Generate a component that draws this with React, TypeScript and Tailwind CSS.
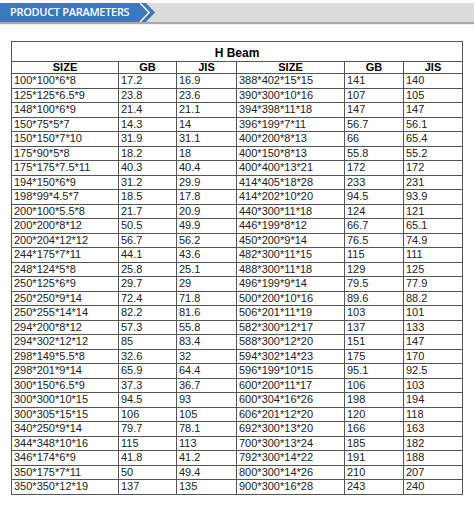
const rows: [string, string, string, string, string, string][] = [
  ["100*100*6*8", "17.2", "16.9", "388*402*15*15", "141", "140"],
  ["125*125*6.5*9", "23.8", "23.6", "390*300*10*16", "107", "105"],
  ["148*100*6*9", "21.4", "21.1", "394*398*11*18", "147", "147"],
  ["150*75*5*7", "14.3", "14", "396*199*7*11", "56.7", "56.1"],
  ["150*150*7*10", "31.9", "31.1", "400*200*8*13", "66", "65.4"],
  ["175*90*5*8", "18.2", "18", "400*150*8*13", "55.8", "55.2"],
  ["175*175*7.5*11", "40.3", "40.4", "400*400*13*21", "172", "172"],
  ["194*150*6*9", "31.2", "29.9", "414*405*18*28", "233", "231"],
  ["198*99*4.5*7", "18.5", "17.8", "414*202*10*20", "94.5", "93.9"],
  ["200*100*5.5*8", "21.7", "20.9", "440*300*11*18", "124", "121"],
  ["200*200*8*12", "50.5", "49.9", "446*199*8*12", "66.7", "65.1"],
  ["200*204*12*12", "56.7", "56.2", "450*200*9*14", "76.5", "74.9"],
  ["244*175*7*11", "44.1", "43.6", "482*300*11*15", "115", "111"],
  ["248*124*5*8", "25.8", "25.1", "488*300*11*18", "129", "125"],
  ["250*125*6*9", "29.7", "29", "496*199*9*14", "79.5", "77.9"],
  ["250*250*9*14", "72.4", "71.8", "500*200*10*16", "89.6", "88.2"],
  ["250*255*14*14", "82.2", "81.6", "506*201*11*19", "103", "101"],
  ["294*200*8*12", "57.3", "55.8", "582*300*12*17", "137", "133"],
  ["294*302*12*12", "85", "83.4", "588*300*12*20", "151", "147"],
  ["298*149*5.5*8", "32.6", "32", "594*302*14*23", "175", "170"],
  ["298*201*9*14", "65.9", "64.4", "596*199*10*15", "95.1", "92.5"],
  ["300*150*6.5*9", "37.3", "36.7", "600*200*11*17", "106", "103"],
  ["300*300*10*15", "94.5", "93", "600*304*16*26", "198", "194"],
  ["300*305*15*15", "106", "105", "606*201*12*20", "120", "118"],
  ["340*250*9*14", "79.7", "78.1", "692*300*13*20", "166", "163"],
  ["344*348*10*16", "115", "113", "700*300*13*24", "185", "182"],
  ["346*174*6*9", "41.8", "41.2", "792*300*14*22", "191", "188"],
  ["350*175*7*11", "50", "49.4", "800*300*14*26", "210", "207"],
  ["350*350*12*19", "137", "135", "900*300*16*28", "243", "240"],
];

const heads = ["SIZE", "GB", "JIS", "SIZE", "GB", "JIS"];

export default function App() {
  return (
    <div className="w-[474px] h-[508px] bg-white overflow-hidden">
      {/* banner */}
      <div className="mt-[3px] h-[19px] bg-[#dcdcdc] shadow-[0_2px_1px_#a9a9a9] flex items-stretch">
        <div className="w-[137px] bg-[#3b78c2] flex items-center pl-[10px] overflow-hidden">
          <span className="text-white text-[11px] font-semibold tracking-[-0.3px] whitespace-nowrap font-['Open_Sans',sans-serif]">
            PRODUCT PARAMETERS
          </span>
        </div>
        <svg width="18" height="19" viewBox="0 0 18 19" className="block">
          <polygon points="0,0 3,0 12,9.5 3,19 0,19" fill="#3b78c2" />
          <polygon points="4,0 9,0 18,9.5 9,19 4,19 13,9.5" fill="#3b78c2" />
          <polyline points="3,0 12,9.5 3,19" fill="none" stroke="#ffffff" strokeWidth="1.2" />
        </svg>
      </div>

      {/* table */}
      <div className="pl-[11px] pt-[19px]">
        <table className="w-[451px] table-fixed border-collapse text-[11px] text-black font-['Liberation_Sans',Arial,sans-serif]">
          <colgroup>
            <col className="w-[107px]" />
            <col className="w-[58px]" />
            <col className="w-[60px]" />
            <col className="w-[108px]" />
            <col className="w-[59px]" />
            <col className="w-[59px]" />
          </colgroup>
          <tbody>
            <tr className="h-[20px]">
              <td colSpan={6} className="border border-[#555] text-center font-bold text-[12px] leading-none pt-[3px]">
                H Beam
              </td>
            </tr>
            <tr className="h-[12px]">
              {heads.map((h, i) => (
                <td key={i} className="border border-[#555] text-center font-bold leading-none p-0">
                  {h}
                </td>
              ))}
            </tr>
            {rows.map((r, i) => (
              <tr key={i} className="h-[14.5px]">
                {r.map((c, j) => (
                  <td key={j} className="border border-[#555] leading-none px-[2px] py-0 whitespace-nowrap text-[#222]">
                    {c}
                  </td>
                ))}
              </tr>
            ))}
          </tbody>
        </table>
      </div>
    </div>
  );
}
